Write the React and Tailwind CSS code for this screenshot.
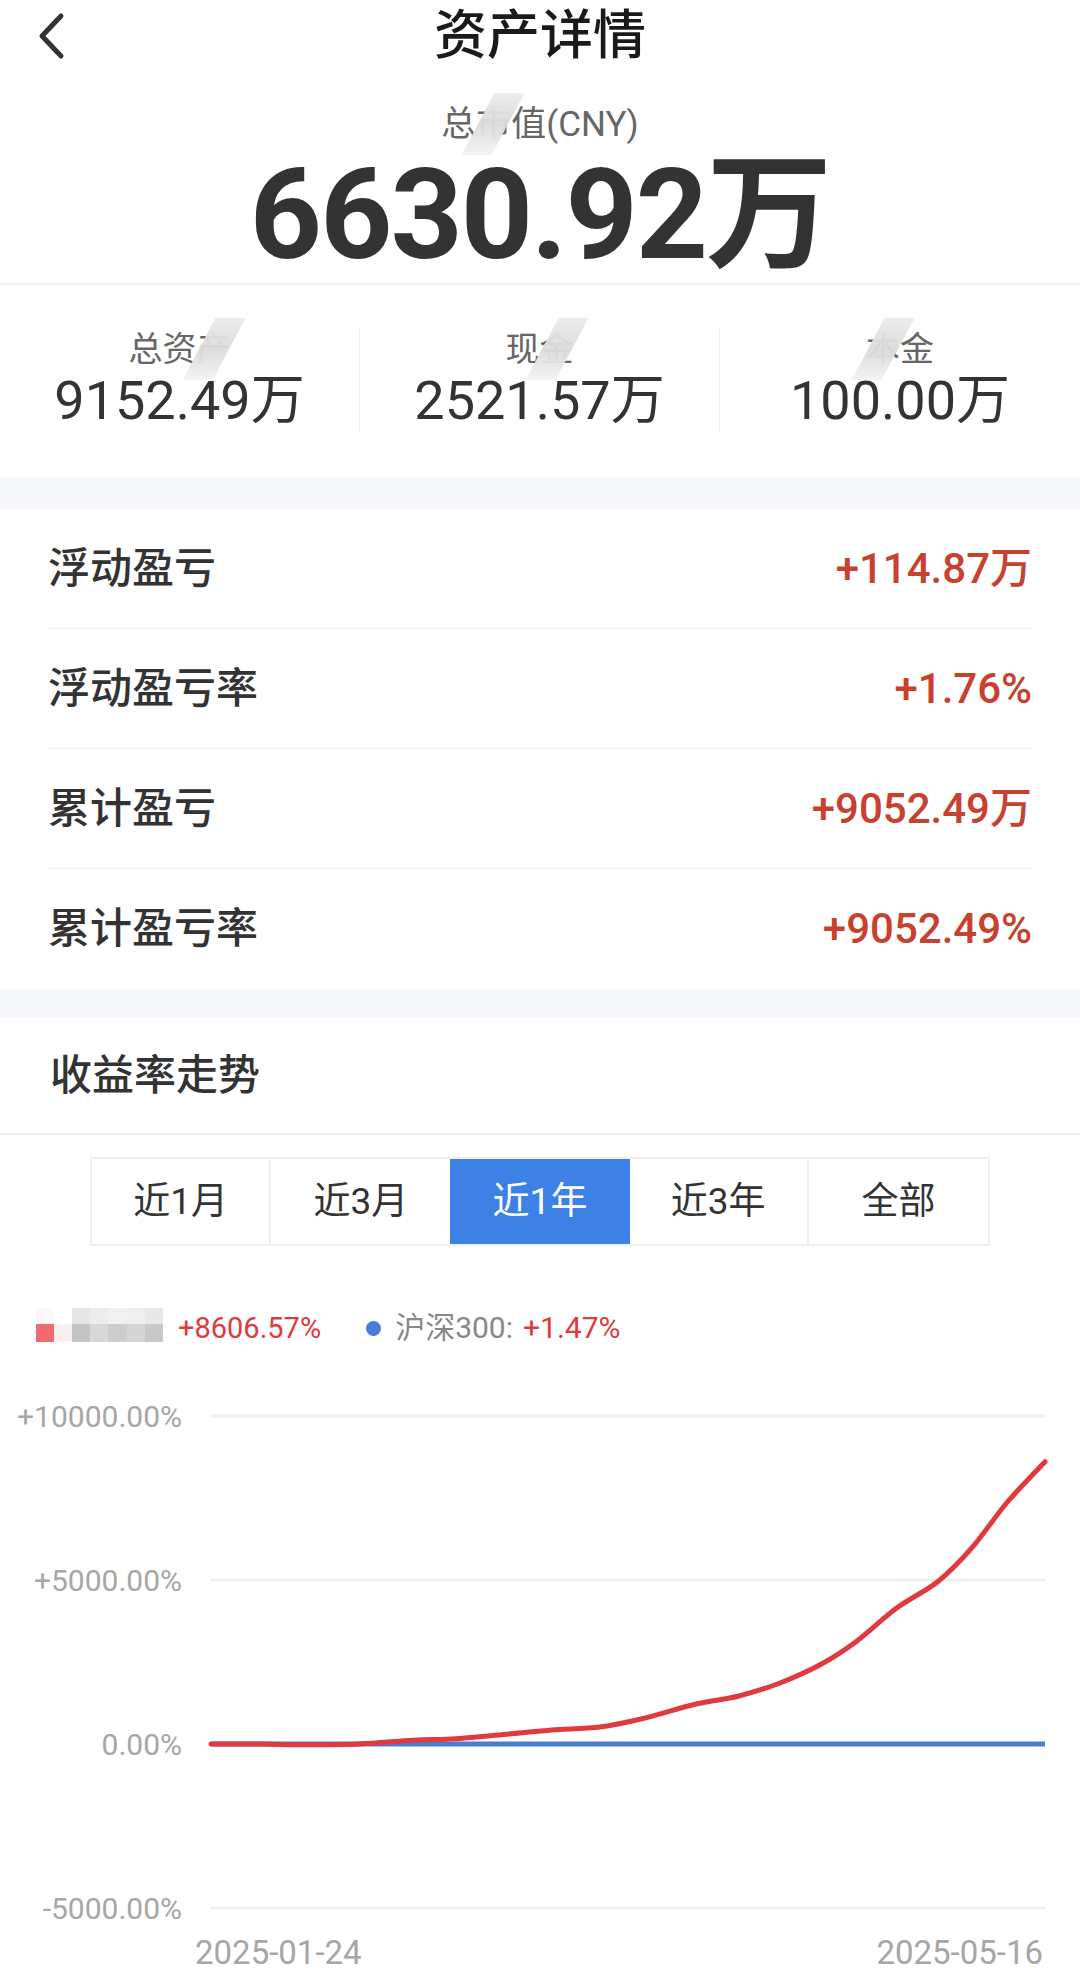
import React from 'react'

const stats = [
  { label: '总资', hidden: '产', value: '9152.49万' },
  { label: '现', hidden: '金', value: '2521.57万' },
  { label: '', hidden: '本', rest: '金', value: '100.00万' },
]

const rows = [
  { label: '浮动盈亏', value: '+114.87万' },
  { label: '浮动盈亏率', value: '+1.76%' },
  { label: '累计盈亏', value: '+9052.49万' },
  { label: '累计盈亏率', value: '+9052.49%' },
]

const tabs = ['近1月', '近3月', '近1年', '近3年', '全部']

// red curve points, in svg coords (x, y)
const redPts = [
  [211, 376], [263, 376], [304, 376.8], [359, 376], [414, 372.2], [456, 370.8],
  [511, 365.8], [552, 362], [600, 359], [642, 350.8], [697, 335.8], [738, 328.2],
  [780, 315], [821, 296.3], [856, 273.7], [897, 239.8], [938, 213.5], [972, 179.7],
  [1007, 134.5], [1045, 93.7],
]

const smoothPath = (pts) => {
  let d = `M${pts[0][0]} ${pts[0][1]}`
  for (let i = 0; i < pts.length - 1; i++) {
    const p0 = pts[i - 1] || pts[i]
    const p1 = pts[i]
    const p2 = pts[i + 1]
    const p3 = pts[i + 2] || p2
    const c1x = p1[0] + (p2[0] - p0[0]) / 6
    const c1y = p1[1] + (p2[1] - p0[1]) / 6
    const c2x = p2[0] - (p3[0] - p1[0]) / 6
    const c2y = p2[1] - (p3[1] - p1[1]) / 6
    d += ` C${c1x} ${c1y} ${c2x} ${c2y} ${p2[0]} ${p2[1]}`
  }
  return d
}

// blurred character with a mosaic smear over it
const Smudged = ({ children }) => (
  <span className="relative inline-block">
    {children}
    <span className="absolute left-[2px] top-[-14px] w-[30px] h-[62px] -skew-x-[28deg] bg-gradient-to-b from-[#ececec] via-[#dadada] to-[#f3f3f3] opacity-95" />
  </span>
)

const Chart = () => {
  const grid = [
    { y: 48, label: '+10000.00%' },
    { y: 212, label: '+5000.00%' },
    { y: 376, label: '0.00%' },
    { y: 540, label: '-5000.00%' },
  ]
  return (
    <svg width="1080" height="600" viewBox="0 0 1080 600" className="block">
      {grid.map((g) => (
        <g key={g.label}>
          <line x1="211" x2="1045" y1={g.y} y2={g.y} stroke="#efefef" strokeWidth="3" />
          <text
            x="182"
            y={g.y + 11}
            textAnchor="end"
            fontSize="30"
            fill="#a6a6a6"
            fontFamily="Roboto, 'Noto Sans CJK SC', sans-serif"
          >
            {g.label}
          </text>
        </g>
      ))}
      <line x1="211" x2="1045" y1="376" y2="376" stroke="#4a7bd6" strokeWidth="5" />
      <path d={smoothPath(redPts)} fill="none" stroke="#e0393e" strokeWidth="5" strokeLinejoin="round" strokeLinecap="round" />
      <text x="195" y="596" fontSize="33" fill="#a6a6a6" fontFamily="Roboto, sans-serif">2025-01-24</text>
      <text x="1043" y="596" fontSize="33" fill="#a6a6a6" textAnchor="end" fontFamily="Roboto, sans-serif">2025-05-16</text>
    </svg>
  )
}

export default function App() {
  return (
    <div className="w-[1080px] h-[1970px] overflow-hidden bg-white font-['Roboto','Noto_Sans_CJK_SC',sans-serif] text-[#333]">
      {/* HEADER */}
      <div className="flex items-center h-[72px]">
        <div className="w-[120px] pl-[36px] flex items-center">
          <svg width="30" height="48" viewBox="0 0 30 48" fill="none">
            <path d="M25 4 L6 24 L25 44" stroke="#333" strokeWidth="5" strokeLinecap="round" strokeLinejoin="round" />
          </svg>
        </div>
        <div className="flex-1 text-center text-[53px] font-medium text-[#1a1a1a] leading-none">资产详情</div>
        <div className="w-[120px]" />
      </div>

      {/* TOTAL */}
      <div className="h-[75px] pt-[30px] flex justify-center items-center text-[35px] text-[#666] leading-none">
        <span>总</span>
        <Smudged>市</Smudged>
        <span>值(CNY)</span>
      </div>
      <div className="h-[136px] flex justify-center items-center text-[126px] font-bold text-[#333] leading-none tracking-[-2px]">
        6630.92万
      </div>
      <div className="h-[2px] bg-[#f0f0f0]" />

      {/* STATS */}
      <div className="pt-[44px] pb-[44px] grid grid-cols-3">
        {stats.map((s, i) => (
          <div key={i} className={`flex flex-col items-center h-[104px] ${i < 2 ? 'border-r border-[#ececec]' : ''}`}>
            <div className="h-[40px] flex items-center text-[34px] text-[#666] leading-none">
              {s.label}
              <Smudged>{s.hidden}</Smudged>
              {s.rest}
            </div>
            <div className="h-[64px] flex items-center text-[54px] text-[#333] leading-none">{s.value}</div>
          </div>
        ))}
      </div>

      <div className="h-[32px] bg-[#f6f7fb]" />

      {/* PROFIT ROWS */}
      <div className="px-[48px]">
        {rows.map((r, i) => (
          <div
            key={r.label}
            className={`flex items-center justify-between h-[120px] ${i < 3 ? 'border-b border-[#eeeeee]' : ''}`}
          >
            <span className="text-[42px] font-medium text-[#333] leading-none">{r.label}</span>
            <span className="text-[42px] font-medium text-[#c8412e] leading-none">{r.value}</span>
          </div>
        ))}
      </div>

      <div className="h-[29px] bg-[#f6f7fb]" />

      {/* TREND */}
      <div className="h-[117px] px-[50px] flex items-center border-b-2 border-[#f0f0f0]">
        <span className="text-[42px] font-medium text-[#333] leading-none">收益率走势</span>
      </div>

      <div className="mt-[22px] mx-[90px] h-[89px] grid grid-cols-5 border-2 border-[#efefef]">
        {tabs.map((t, i) => (
          <div
            key={t}
            className={`flex items-center justify-center text-[37px] leading-none ${
              i === 2 ? 'bg-[#3d80e6] text-white' : 'text-[#333]'
            } ${i === 0 || i === 3 ? 'border-r-2 border-[#efefef]' : ''}`}
          >
            {t}
          </div>
        ))}
      </div>

      {/* LEGEND */}
      <div className="mt-[60px] h-[38px] pl-[36px] flex items-center">
        <div className="flex flex-col">
          <div className="flex">
            <div className="w-[18px] h-[16px] bg-[#fdf7f7]" />
            <div className="w-[18px] h-[16px] bg-white" />
            <div className="w-[18px] h-[16px] bg-[#e6e6e6]" />
            <div className="w-[18px] h-[16px] bg-[#ececec]" />
            <div className="w-[19px] h-[16px] bg-[#f0f0f0]" />
            <div className="w-[18px] h-[16px] bg-[#eeeeee]" />
            <div className="w-[18px] h-[16px] bg-[#e8e8e8]" />
          </div>
          <div className="flex">
            <div className="w-[18px] h-[18px] bg-[#ef6b6e]" />
            <div className="w-[18px] h-[18px] bg-[#fbf0f0]" />
            <div className="w-[18px] h-[18px] bg-[#c4c4c4]" />
            <div className="w-[18px] h-[18px] bg-[#d8d8d8]" />
            <div className="w-[19px] h-[18px] bg-[#cccccc]" />
            <div className="w-[18px] h-[18px] bg-[#d4d4d4]" />
            <div className="w-[18px] h-[18px] bg-[#c8c8c8]" />
          </div>
        </div>
        <span className="ml-[15px] mt-[6px] text-[29px] text-[#e0393e] leading-none">+8606.57%</span>
        <span className="ml-[45px] mt-[6px] w-[15px] h-[15px] rounded-full bg-[#4a7bd6]" />
        <span className="ml-[14px] mt-[6px] text-[30px] text-[#888] leading-none">沪深300:</span>
        <span className="ml-[10px] mt-[6px] text-[30px] text-[#e0393e] leading-none">+1.47%</span>
      </div>

      {/* CHART */}
      <div className="mt-[24px]">
        <Chart />
      </div>
    </div>
  )
}
